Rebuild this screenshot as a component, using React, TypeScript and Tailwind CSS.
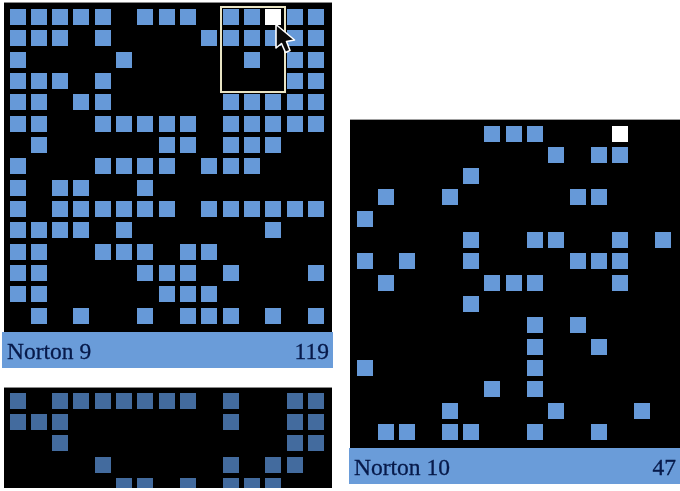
const NINE: number[][] = [
  [0, 1, 2, 3, 4, 6, 7, 8, 10, 11, 12, 13, 14],
  [0, 1, 2, 4, 9, 10, 11, 12, 13, 14],
  [0, 5, 11, 13, 14],
  [0, 1, 2, 4, 13, 14],
  [0, 1, 3, 4, 10, 11, 12, 13, 14],
  [0, 1, 4, 5, 6, 7, 8, 10, 11, 12, 13, 14],
  [1, 7, 8, 10, 11, 12],
  [0, 4, 5, 6, 7, 9, 10, 11],
  [0, 2, 3, 6],
  [0, 2, 3, 4, 5, 6, 7, 9, 10, 11, 12, 13, 14],
  [0, 1, 2, 3, 5, 12],
  [0, 1, 4, 5, 6, 8, 9],
  [0, 1, 6, 7, 8, 10, 14],
  [0, 1, 7, 8, 9],
  [1, 3, 6, 8, 9, 10, 12, 14],
];

const TEN: number[][] = [
  [6, 7, 8, 12],
  [9, 11, 12],
  [5],
  [1, 4, 10, 11],
  [0],
  [5, 8, 9, 12, 14],
  [0, 2, 5, 10, 11, 12],
  [1, 6, 7, 8, 12],
  [5],
  [8, 10],
  [8, 11],
  [0, 8],
  [6, 8],
  [4, 9, 13],
  [1, 2, 4, 5, 8, 11],
];

const DIM: number[][] = [
  [0, 2, 3, 4, 5, 6, 7, 8, 10, 13, 14],
  [0, 1, 2, 10, 13, 14],
  [2, 13, 14],
  [4, 10, 12, 13],
  [5, 6, 8, 10, 11, 12],
];

function Grid({ rows, white, dim }: { rows: number[][]; white?: number; dim?: boolean }) {
  return (
    <div className="grid grid-cols-[repeat(15,16px)] auto-rows-[16px] gap-[5.33px]">
      {rows.flatMap((row, r) =>
        Array.from({ length: 15 }, (_, c) => {
          const on = row.includes(c);
          const isWhite = white === c && r === 0;
          return (
            <div
              key={`${r}-${c}`}
              className={
                !on ? "" : isWhite ? "bg-white" : dim ? "bg-[#436b9e]" : "bg-[#6699d8]"
              }
            />
          );
        })
      )}
    </div>
  );
}

function Label({ name, count }: { name: string; count: number }) {
  return (
    <div className="flex h-[36px] items-center justify-between bg-[#6a9cd9] pl-[5px] pr-[4px] pt-[4px] font-['Liberation_Serif',serif] text-[23.5px] leading-none text-[#071a4a] [-webkit-text-stroke:0.3px_#071a4a]">
      <span>{name}</span>
      <span>{count}</span>
    </div>
  );
}

function Cursor() {
  return (
    <svg width="24" height="33" viewBox="0 0 24 33" className="absolute left-[271px] top-[20px]">
      <path
        d="M3 2.5 L3 26 L8.5 21.5 L12.5 30.5 L17 28.5 L13.5 19.5 L21.5 18 Z"
        fill="#0a0a0a"
        stroke="#ffffff"
        strokeWidth="1.6"
        strokeLinejoin="round"
      />
    </svg>
  );
}

export default function App() {
  return (
    <div className="flex h-[491px] w-[680px] overflow-hidden bg-white blur-[0.4px]">
      <div className="ml-[2px] flex w-[331px] shrink-0 flex-col pt-[2px]">
        <div className="relative">
          <div className="mx-[1.5px] border-t border-[#8a8a8a] bg-black pb-[8px] pl-[6px] pr-[8px] pt-[6px]">
            <Grid rows={NINE} white={12} />
          </div>
          <div className="absolute left-[217.5px] top-[4px] h-[87px] w-[66px] border-2 border-[#e9e4c4]" />
          <Cursor />
        </div>
        <Label name="Norton 9" count={119} />
        <div className="mx-[1.5px] mt-[19px] h-[101px] overflow-hidden border-t border-[#8a8a8a] bg-black pl-[6px] pr-[8px] pt-[5px]">
          <Grid rows={DIM} dim />
        </div>
      </div>
      <div className="ml-[16px] flex w-[331px] shrink-0 flex-col pt-[119px]">
        <div className="ml-[1px] border-t border-[#a0a0a0] bg-black pb-[8px] pl-[6.5px] pt-[5.5px]">
          <Grid rows={TEN} white={12} />
        </div>
        <Label name="Norton 10" count={47} />
      </div>
    </div>
  );
}
